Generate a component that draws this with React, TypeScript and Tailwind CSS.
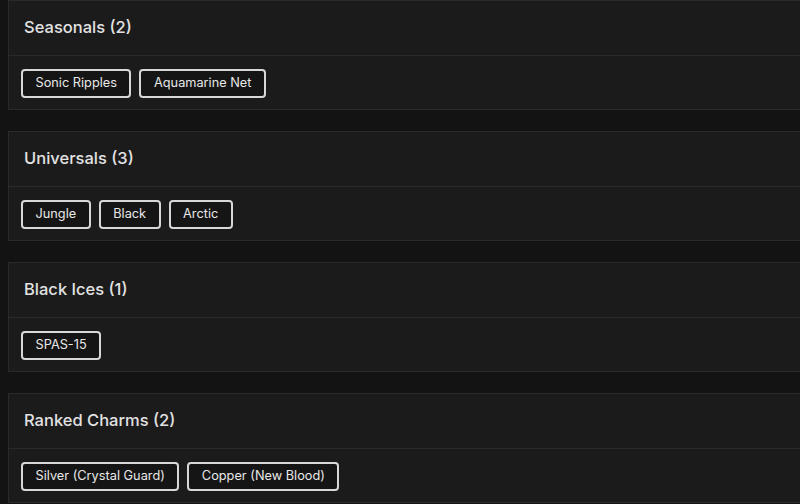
import React from 'react';

type Group = { title: string; items: string[] };

const GROUPS: Group[] = [
  { title: 'Seasonals (2)', items: ['Sonic Ripples', 'Aquamarine Net'] },
  { title: 'Universals (3)', items: ['Jungle', 'Black', 'Arctic'] },
  { title: 'Black Ices (1)', items: ['SPAS-15'] },
  { title: 'Ranked Charms (2)', items: ['Silver (Crystal Guard)', 'Copper (New Blood)'] },
];

function GroupCard({ group }: { group: Group }) {
  return (
    <section className="w-[820px] h-[110px] shrink-0 flex flex-col border border-[#2a2a2a] bg-[#1b1b1b]">
      <div className="h-[55px] shrink-0 flex items-center px-[15px] pb-[1px] border-b border-[#2a2a2a]">
        <h2 className="text-[16.5px] font-medium text-[#e2e2e2]">{group.title}</h2>
      </div>
      <div className="flex flex-1 items-center gap-2 px-3 pt-[1px]">
        {group.items.map((item) => (
          <button
            key={item}
            className="h-[29px] px-[12.5px] rounded-[4px] border-2 border-[#d8d8d8] bg-[#151515] text-[12.75px] text-[#e8e8e8]"
          >
            {item}
          </button>
        ))}
      </div>
    </section>
  );
}

export default function App() {
  return (
    <div
      className="w-[800px] h-[504px] overflow-hidden bg-[#131313] flex flex-col gap-[21px] pl-2"
      style={{ fontFamily: 'Inter, "Noto Sans", sans-serif' }}
    >
      {GROUPS.map((group) => (
        <GroupCard key={group.title} group={group} />
      ))}
    </div>
  );
}
